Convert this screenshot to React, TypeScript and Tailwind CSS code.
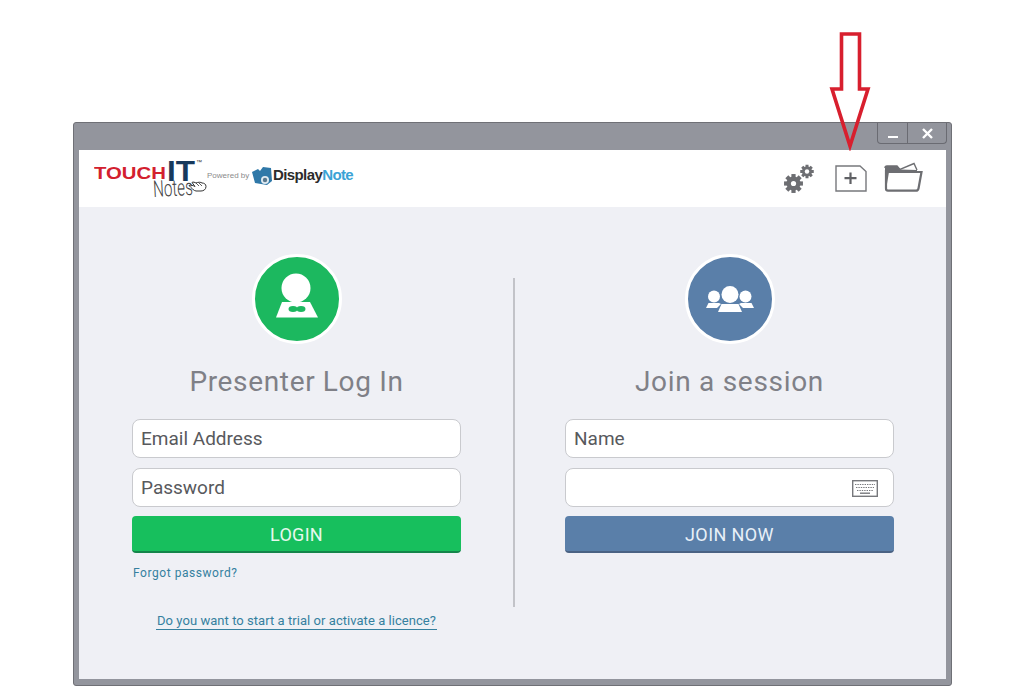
import React from 'react';

function Gears() {
  const gear = (cx: number, cy: number, r: number, teeth: number, hole: number) => {
    const pts = [];
    for (let i = 0; i < teeth; i++) {
      const a = (i / teeth) * 360;
      pts.push(
        <rect
          key={i}
          x={cx - r * 0.3}
          y={cy - r * 1.35}
          width={r * 0.6}
          height={r * 0.6}
          transform={`rotate(${a} ${cx} ${cy})`}
        />
      );
    }
    return (
      <g fill="#6d6e72">
        {pts}
        <circle cx={cx} cy={cy} r={r} />
        <circle cx={cx} cy={cy} r={hole} fill="#ffffff" />
      </g>
    );
  };
  return (
    <svg width="32" height="30" viewBox="0 0 32 30">
      {gear(9.5, 19.5, 7, 8, 2.6)}
      {gear(23, 7.5, 5, 8, 2.2)}
    </svg>
  );
}

function NewNote() {
  return (
    <svg width="32" height="27" viewBox="0 0 32 27" fill="none">
      <path d="M1 1H25L31 6.5V26H1Z" stroke="#77787c" strokeWidth="1.4" />
      <path d="M15.5 7.5V19M9.5 13.2H21.5" stroke="#606165" strokeWidth="2.2" />
    </svg>
  );
}

function FolderIcon() {
  return (
    <svg width="39" height="30" viewBox="0 0 39 30" fill="none">
      <path d="M1 6C1 4.5 2 4 3 4H13L16 7.5L30 1.5L33 8" stroke="#6d6e72" strokeWidth="1.4" />
      <path d="M1 6C1 4.5 2 4 3 4H13L16 7.5L33 8V10H5L2 28L1 27Z" fill="#6d6e72" />
      <path d="M3.5 10H37.5L34.5 26.5C34.2 28 33.4 28.7 32 28.7H4C2.6 28.7 2 28 2 26.5V8" stroke="#6d6e72" strokeWidth="2.2" />
    </svg>
  );
}

function PresenterIcon() {
  return (
    <svg width="44" height="46" viewBox="0 0 44 46">
      <circle cx="21" cy="15" r="14.5" fill="#ffffff" />
      <path d="M7 29H35L43 44.5H1Z" fill="#ffffff" />
      <ellipse cx="18" cy="36" rx="4.5" ry="3" fill="#1cb85f" />
      <ellipse cx="26" cy="36" rx="4.5" ry="3" fill="#1cb85f" />
    </svg>
  );
}

function GroupIcon() {
  return (
    <svg width="48" height="26" viewBox="0 0 48 26" fill="#ffffff">
      <circle cx="8" cy="10.5" r="6" />
      <circle cx="39.5" cy="10.5" r="6" />
      <path d="M0 22L2.5 17H13L15 18L11 22Z" />
      <path d="M48 22L45.5 17H35L33 18L37 22Z" />
      <circle cx="24" cy="8.5" r="8.5" />
      <path d="M12 26L15.5 18H32.5L36 26Z" />
    </svg>
  );
}

function KeyboardIcon() {
  return (
    <svg width="26" height="17" viewBox="0 0 26 17" fill="none">
      <rect x="0.7" y="0.7" width="24.6" height="15.6" stroke="#77787c" strokeWidth="1.4" />
      <path d="M3 4.5H23M4 7.5H22M5 10.5H21" stroke="#77787c" strokeWidth="1.2" strokeDasharray="1.4 1" />
      <path d="M8 13.2H18" stroke="#77787c" strokeWidth="1.4" />
    </svg>
  );
}

function Logo() {
  return (
    <div className="relative w-[280px] h-[57px] font-['Liberation_Sans',sans-serif]">
      <span className="absolute left-[15px] top-[16px] text-[16px] leading-none font-bold text-[#d3202e] scale-x-[1.27] origin-left">
        TOUCH
      </span>
      <span className="absolute left-[88px] top-[6px] text-[30px] leading-none font-bold text-[#17395c] scale-x-[1.05] origin-left">
        IT
      </span>
      <span className="absolute left-[117px] top-[9px] text-[6px] leading-none text-[#333]">™</span>
      <span className="absolute left-[74px] top-[28px] text-[23px] leading-none font-light font-['Roboto',sans-serif] text-[#444] scale-x-[0.66] origin-left -rotate-3">
        Notes
      </span>
      <svg className="absolute left-[109px] top-[30px]" width="19" height="12" viewBox="0 0 19 12" fill="none">
        <path d="M18 6.5C18 9.5 15.5 11 13 11H8C6 11 3 7.5 1 5.5C3 4.5 5 5.5 7 6.5L4 2.5C5 1.5 7 2.5 8 3C10 2 13 2 14 3C16 3 18 4 18 6.5Z" stroke="#333" strokeWidth="1" />
        <path d="M8 3L11 6M11 3L14 6" stroke="#333" strokeWidth="0.8" />
      </svg>
      <span className="absolute left-[128px] top-[22px] text-[8px] leading-none text-[#8b8b8b]">Powered by</span>
      <svg className="absolute left-[172px] top-[16px]" width="22" height="20" viewBox="0 0 22 20">
        <path d="M1 6L7 3L9 5L12 1L20 2L21 15L16 19L4 17Z" fill="#2f78a8" />
        <circle cx="14" cy="14" r="4" fill="#dfe9f0" />
        <circle cx="14" cy="14" r="2.2" fill="#59788e" />
      </svg>
      <span className="absolute left-[194px] top-[17px] text-[15px] leading-none font-bold tracking-[-0.6px] text-[#2c2c2c]">
        Display<span className="text-[#3aa3d6]">Note</span>
      </span>
    </div>
  );
}

function Field({ label, children }: { label?: string; children?: React.ReactNode }) {
  return (
    <div className="h-[39px] flex items-center justify-between pl-2 pr-[15px] pt-[1px] bg-white rounded-lg border border-[#c9cace] text-[19px] text-[#58595d]">
      <span>{label}</span>
      {children}
    </div>
  );
}

export default function App() {
  return (
    <div className="relative w-[1024px] h-[700px] bg-white pt-[122px] pl-[73px] overflow-hidden font-['Roboto',sans-serif]">
      <div className="w-[879px] h-[564px] flex flex-col bg-[#93959d] border border-[#6f7076] rounded-[3px] px-[5px] pb-[6px]">
        {/* title bar */}
        <div className="h-[27px] shrink-0 flex justify-end items-start">
          <div className="flex h-[21px] mr-[-1px] border border-t-0 border-[#6a6b72] rounded-b-[4px] text-white">
            <div className="w-[30px] flex items-end justify-center pb-[5px] border-r border-[#6a6b72]">
              <div className="w-[10px] h-[2px] bg-white" />
            </div>
            <div className="w-[38px] flex items-center justify-center">
              <svg width="11" height="11" viewBox="0 0 11 11">
                <path d="M1 1L10 10M10 1L1 10" stroke="#ffffff" strokeWidth="2.4" />
              </svg>
            </div>
          </div>
        </div>

        {/* header */}
        <div className="h-[57px] shrink-0 bg-white flex items-start justify-between">
          <Logo />
          <div className="flex items-start pr-[23px] pt-[12px]">
            <div className="mr-[19px] mt-[2px]"><Gears /></div>
            <div className="mr-[17px] mt-[3px]"><NewNote /></div>
            <FolderIcon />
          </div>
        </div>

        {/* content */}
        <div className="flex-1 bg-[#eff0f5] flex">
          <div className="w-[434px] pl-[53px] pr-[52px] pt-[47px] flex flex-col">
            <div className="self-center w-[90px] h-[90px] rounded-full bg-[#1cb85f] border-[3px] border-white flex items-center justify-center">
              <div className="mt-[-6px]"><PresenterIcon /></div>
            </div>
            <h1 className="mt-[19px] text-center text-[28px] leading-[38px] tracking-[0.65px] text-[#7f8087]">
              Presenter Log In
            </h1>
            <div className="mt-[18px] flex flex-col gap-[10px]">
              <Field label="Email Address" />
              <Field label="Password" />
            </div>
            <button className="mt-[9px] h-[37px] pt-[1px] rounded-[4px] bg-[#17bf5d] border-b-2 border-[#14854a] text-[#e8f8ee] text-[18px] tracking-[0.3px]">
              LOGIN
            </button>
            <a className="mt-[12px] ml-[1px] text-[12px] leading-[16px] tracking-[0.55px] text-[#35809f]">Forgot password?</a>
            <div className="mt-[27px] text-center">
              <a className="inline-block border-b border-[#35809f] text-[13px] leading-[16px] tracking-[0.05px] text-[#35809f] px-[1px]">
                Do you want to start a trial or activate a licence?
              </a>
            </div>
          </div>

          <div className="w-[2px] h-[329px] mt-[71px] bg-[#c2c3c8]" />

          <div className="flex-1 pl-[50px] pr-[52px] pt-[47px] flex flex-col">
            <div className="self-center w-[90px] h-[90px] rounded-full bg-[#5a7fa9] border-[3px] border-white flex items-center justify-center">
              <GroupIcon />
            </div>
            <h1 className="mt-[19px] text-center text-[28px] leading-[38px] tracking-[0.7px] text-[#7f8087]">
              Join a session
            </h1>
            <div className="mt-[18px] flex flex-col gap-[10px]">
              <Field label="Name" />
              <Field>
                <KeyboardIcon />
              </Field>
            </div>
            <button className="mt-[9px] h-[37px] pt-[1px] rounded-[4px] bg-[#5a7fa9] border-b-2 border-[#4a6283] text-[#e8f0f8] text-[18px] tracking-[0.4px]">
              JOIN NOW
            </button>
          </div>
        </div>
      </div>

      {/* red arrow annotation */}
      <svg className="absolute left-[829px] top-[31px]" width="44" height="120" viewBox="0 0 44 120" fill="none">
        <path d="M12.5 3H30.5V58H39L21 115L3 58H12.5Z" stroke="#d81f2e" strokeWidth="3.6" />
      </svg>
    </div>
  );
}
